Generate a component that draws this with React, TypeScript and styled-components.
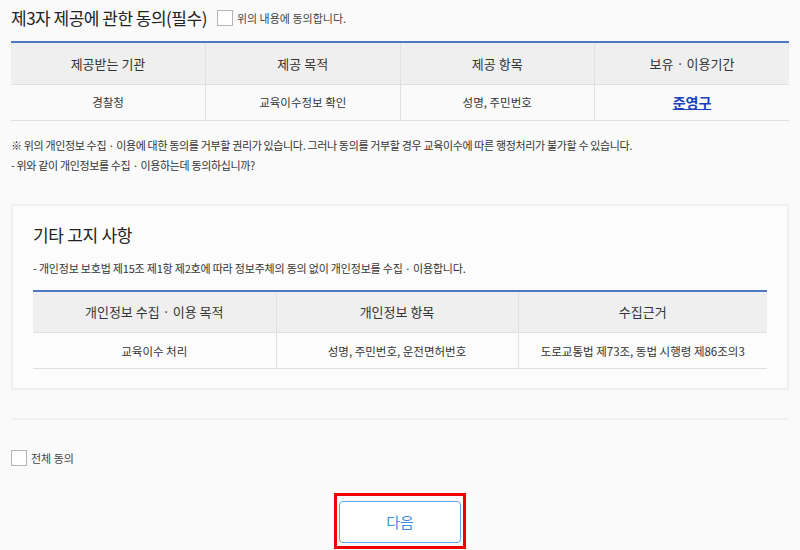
import React from "react";
import styled, { createGlobalStyle } from "styled-components";

const Global = createGlobalStyle`
  html, body { margin: 0; padding: 0; background: #fafafa; }
  body { font-family: "Noto Sans CJK KR", "Noto Sans", sans-serif; color: #333; }
  * { box-sizing: border-box; }
`;

const Page = styled.div`
  width: 800px;
  height: 550px;
  overflow: hidden;
  padding: 0 11px;
`;

const TitleRow = styled.div`
  display: flex;
  align-items: center;
  height: 41px;
  padding-bottom: 6px;
`;

const Title = styled.h2<{ $size: number }>`
  margin: 0;
  font-size: ${(p) => p.$size}px;
  font-weight: 400;
  color: #222;
  letter-spacing: -0.5px;
`;

const CheckLabel = styled.label<{ $ml: number }>`
  display: inline-flex;
  align-items: center;
  gap: 4px;
  margin-left: ${(p) => p.$ml}px;
  font-size: 11px;
  color: #444;
`;

const Box = styled.span`
  width: 16px;
  height: 16px;
  border: 1px solid #b5b5b5;
  background: #fff;
  display: inline-block;
`;

const Table = styled.table`
  width: 100%;
  border-collapse: collapse;
  table-layout: fixed;
  border-top: 2px solid #4d78c2;
`;

const Th = styled.th<{ $w?: number }>`
  background: #efefef;
  height: 42px;
  font-size: 13px;
  font-weight: 400;
  color: #333;
  width: ${(p) => (p.$w ? `${p.$w}px` : "auto")};
  border-bottom: 1px solid #e0e0e0;
  border-left: 1px solid #e0e0e0;
  &:first-child { border-left: none; }
`;

const Td = styled.td`
  height: 36px;
  font-size: 11.5px;
  text-align: center;
  color: #333;
  border-bottom: 1px solid #e0e0e0;
  border-left: 1px solid #e0e0e0;
  &:first-child { border-left: none; }
`;

const Link = styled.a`
  color: #1c3fbe;
  font-weight: 700;
  font-size: 14px;
  text-decoration: underline;
`;

const Notes = styled.div`
  padding-top: 14px;
  font-size: 11px;
  line-height: 20px;
  color: #333;
  letter-spacing: -0.35px;
`;

const Panel = styled.div`
  margin-top: 29px;
  border: 2px solid #efefef;
  background: #fcfcfc;
  padding: 14px 20px 21px;
  height: 186px;
`;

const PanelTitle = styled(Title)`
  height: 30px;
  line-height: 30px;
  letter-spacing: -0.3px;
`;

const PanelText = styled.p`
  margin: 9px 0 0;
  font-size: 11px;
  line-height: 18px;
  height: 31px;
  letter-spacing: -0.2px;
`;

const Separator = styled.hr`
  margin: 28px 0 0;
  border: none;
  border-top: 2px solid #f0f0f0;
`;

const AllRow = styled.div`
  margin-top: 30px;
  height: 17px;
  display: flex;
  align-items: center;
`;

const Actions = styled.div`
  display: flex;
  justify-content: center;
  margin-top: 26px;
`;

const Highlight = styled.div`
  border: 3px solid #f00000;
  padding: 5px 2px 3px;
`;

const Button = styled.button`
  width: 122px;
  height: 42px;
  border: 1px solid #5ea6f2;
  border-radius: 4px;
  background: #fff;
  color: #3f8de0;
  font-family: inherit;
  font-size: 15px;
`;

export default function App() {
  return (
    <Page>
      <Global />
      <TitleRow>
        <Title $size={17}>제3자 제공에 관한 동의(필수)</Title>
        <CheckLabel $ml={10}>
          <Box />
          위의 내용에 동의합니다.
        </CheckLabel>
      </TitleRow>
      <Table>
        <thead>
          <tr>
            <Th>제공받는 기관</Th>
            <Th>제공 목적</Th>
            <Th>제공 항목</Th>
            <Th>보유 · 이용기간</Th>
          </tr>
        </thead>
        <tbody>
          <tr>
            <Td>경찰청</Td>
            <Td>교육이수정보 확인</Td>
            <Td>성명, 주민번호</Td>
            <Td>
              <Link href="#">준영구</Link>
            </Td>
          </tr>
        </tbody>
      </Table>
      <Notes>
        <div>※ 위의 개인정보 수집 · 이용에 대한 동의를 거부할 권리가 있습니다. 그러나 동의를 거부할 경우 교육이수에 따른 행정처리가 불가할 수 있습니다.</div>
        <div>- 위와 같이 개인정보를 수집 · 이용하는데 동의하십니까?</div>
      </Notes>
      <Panel>
        <PanelTitle $size={17}>기타 고지 사항</PanelTitle>
        <PanelText>- 개인정보 보호법 제15조 제1항 제2호에 따라 정보주체의 동의 없이 개인정보를 수집 · 이용합니다.</PanelText>
        <Table>
          <thead>
            <tr>
              <Th $w={243}>개인정보 수집 · 이용 목적</Th>
              <Th $w={242}>개인정보 항목</Th>
              <Th>수집근거</Th>
            </tr>
          </thead>
          <tbody>
            <tr>
              <Td>교육이수 처리</Td>
              <Td>성명, 주민번호, 운전면허번호</Td>
              <Td>도로교통법 제73조, 동법 시행령 제86조의3</Td>
            </tr>
          </tbody>
        </Table>
      </Panel>
      <Separator />
      <AllRow>
        <CheckLabel $ml={0}>
          <Box />
          전체 동의
        </CheckLabel>
      </AllRow>
      <Actions>
        <Highlight>
          <Button>다음</Button>
        </Highlight>
      </Actions>
    </Page>
  );
}
